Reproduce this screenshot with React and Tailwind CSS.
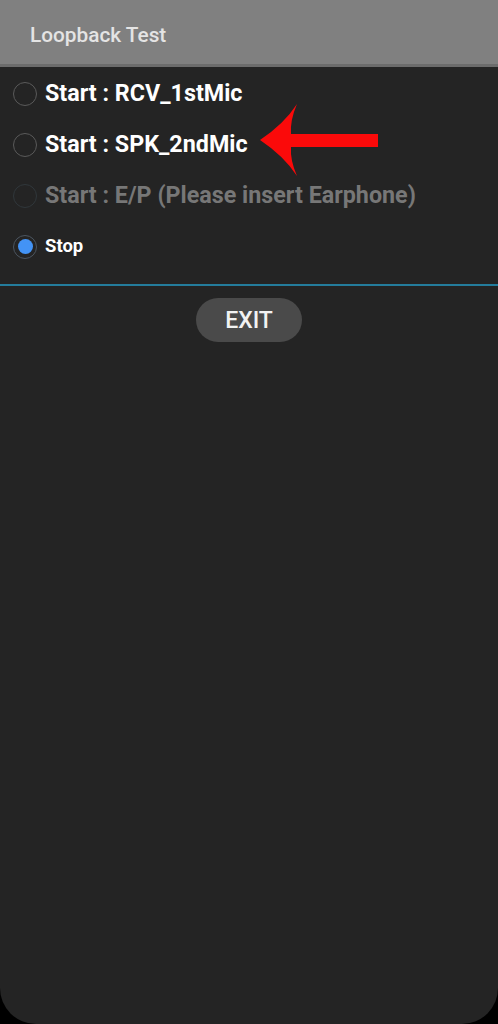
import React from "react";

function Radio({ state }) {
  if (state === "checked") {
    return (
      <span className="w-6 h-6 rounded-full border-[1.5px] border-[#4b5560] flex items-center justify-center shrink-0">
        <span className="w-[15px] h-[15px] rounded-full bg-[#4393f5]" />
      </span>
    );
  }
  if (state === "disabled") {
    return <span className="w-6 h-6 rounded-full border-[1.5px] border-[#30373b] shrink-0" />;
  }
  return <span className="w-6 h-6 rounded-full border-[1.5px] border-[#5a5a5a] shrink-0" />;
}

function Row({ label, state, small }) {
  const color = state === "disabled" ? "text-[#777777]" : "text-white";
  return (
    <div className="h-[51px] flex items-center pl-[13px] gap-2">
      <Radio state={state} />
      <span className={`${color} font-bold ${small ? "text-[18.5px]" : "text-[23.3px]"} leading-none`}>
        {label}
      </span>
    </div>
  );
}

export default function App() {
  return (
    <div className="w-[498px] h-[1024px] bg-black" style={{ fontFamily: "Roboto, 'Noto Sans', sans-serif" }}>
      <div className="relative w-full h-full bg-[#242424] rounded-b-[36px] overflow-hidden flex flex-col">
        <div className="h-[67px] bg-[#808080] border-b-[3px] border-[#6c6c6c] flex items-center pl-[30px] pt-[7px]">
          <span className="text-[#e4e4e4] text-[20.8px] font-medium">Loopback Test</span>
        </div>
        <div className="flex flex-col pt-[1px]">
          <Row label="Start : RCV_1stMic" state="off" />
          <Row label="Start : SPK_2ndMic" state="off" />
          <Row label="Start : E/P (Please insert Earphone)" state="disabled" />
          <Row label="Stop" state="checked" small />
        </div>
        <div className="mt-[12px] h-[2px] bg-[#247c9c]" />
        <div className="flex justify-center mt-[12px]">
          <button className="w-[106px] h-[44px] rounded-full bg-[#4a4a4a] text-[#f2f2f2] text-[23px] font-medium pt-[3px]">
            EXIT
          </button>
        </div>
        <svg className="absolute left-0 top-0" width="498" height="200" viewBox="0 0 498 200">
          <path
            d="M260 140 Q284 124 297 104 Q290 120 291 134 L378 134 L378 147 L291 147 Q290 160 297 176 Q284 156 260 140 Z"
            fill="#fb0a0a"
          />
        </svg>
      </div>
    </div>
  );
}
